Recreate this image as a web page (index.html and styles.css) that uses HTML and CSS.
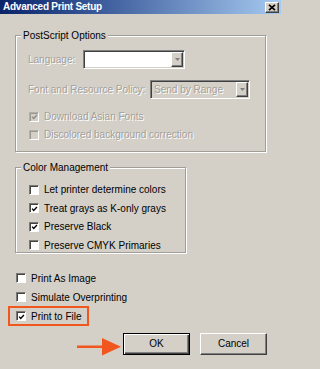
FILE: index.html
```html
<!DOCTYPE html>
<html lang="en">
<head>
<meta charset="utf-8">
<title>Advanced Print Setup</title>
<link rel="stylesheet" href="styles.css">
</head>
<body>
<div class="window">
  <div class="titlebar">
    <span class="title">Advanced Print Setup</span>
    <span class="close"><svg width="8" height="7" viewBox="0 0 8 7"><path d="M1 0.8L7 6.2M7 0.8L1 6.2" stroke="#000" stroke-width="1.7" fill="none"/></svg></span>
  </div>
  <div class="content">
    <div class="group group-ps">
      <span class="group-title">PostScript Options</span>
      <div class="field field-lang">
        <span class="label disabled">Language:</span>
        <span class="select select-lang">
          <span class="select-value"></span>
          <span class="select-btn"><svg width="5" height="3" viewBox="0 0 5 3"><path d="M0 0H5L2.5 3Z" fill="#808080"/></svg></span>
        </span>
      </div>
      <div class="field field-policy">
        <span class="label disabled">Font and Resource Policy:</span>
        <span class="select select-policy">
          <span class="select-value disabled">Send by Range</span>
          <span class="select-btn"><svg width="5" height="3" viewBox="0 0 5 3"><path d="M0 0H5L2.5 3Z" fill="#808080"/></svg></span>
        </span>
      </div>
      <div class="check-list check-list-ps">
        <div class="check is-disabled">
          <span class="box"><svg width="8" height="8" viewBox="0 0 8 8"><polyline points="1.3,3.6 3.1,5.6 6.8,1.6" fill="none" stroke-width="1.6"/></svg></span>
          <span class="text disabled">Download Asian Fonts</span>
        </div>
        <div class="check is-disabled">
          <span class="box"></span>
          <span class="text disabled">Discolored background correction</span>
        </div>
      </div>
    </div>

    <div class="group group-cm">
      <span class="group-title">Color Management</span>
      <div class="check-list check-list-cm">
        <div class="check">
          <span class="box"></span>
          <span class="text">Let printer determine colors</span>
        </div>
        <div class="check">
          <span class="box"><svg width="8" height="8" viewBox="0 0 8 8"><polyline points="1.3,3.6 3.1,5.6 6.8,1.6" fill="none" stroke-width="1.6"/></svg></span>
          <span class="text">Treat grays as K-only grays</span>
        </div>
        <div class="check">
          <span class="box"><svg width="8" height="8" viewBox="0 0 8 8"><polyline points="1.3,3.6 3.1,5.6 6.8,1.6" fill="none" stroke-width="1.6"/></svg></span>
          <span class="text">Preserve Black</span>
        </div>
        <div class="check">
          <span class="box"></span>
          <span class="text">Preserve CMYK Primaries</span>
        </div>
      </div>
    </div>

    <div class="check-list check-list-main">
      <div class="check">
        <span class="box"></span>
        <span class="text">Print As Image</span>
      </div>
      <div class="check">
        <span class="box"></span>
        <span class="text">Simulate Overprinting</span>
      </div>
      <div class="check highlight">
        <span class="box"><svg width="8" height="8" viewBox="0 0 8 8"><polyline points="1.3,3.6 3.1,5.6 6.8,1.6" fill="none" stroke-width="1.6"/></svg></span>
        <span class="text">Print to File</span>
      </div>
    </div>

    <div class="buttons">
      <svg class="arrow" width="44" height="18" viewBox="0 0 44 18"><path d="M0 7.6H25V0L44 8.75L25 17.5V10.1H0Z" fill="#f1561f"/></svg>
      <span class="btn btn-default">OK</span>
      <span class="btn">Cancel</span>
    </div>
  </div>
</div>
</body>
</html>
```

FILE: styles.css
```css
* {
  box-sizing: border-box;
}

html,
body {
  margin: 0;
  padding: 0;
}

html {
  background: #d4d0c8;
}

body {
  width: 281px;
  height: 369px;
  overflow: hidden;
  background: #d4d0c8;
  font-family: "Liberation Sans", Arial, sans-serif;
  font-size: 10px;
  color: #000;
}

.window {
  width: 281px;
  height: 369px;
  overflow: hidden;
  background: #d4d0c8;
  display: flex;
  flex-direction: column;
}

/* Title bar */
.titlebar {
  height: 14px;
  flex: none;
  display: flex;
  align-items: center;
  justify-content: space-between;
  padding: 0 2px 0 3px;
  background: linear-gradient(to right, #0a246a 0%, #3a5a9a 35%, #a6caf0 100%);
}

.title {
  color: #fff;
  font-weight: bold;
  font-size: 10px;
  line-height: 14px;
  letter-spacing: -0.25px;
}

.close {
  width: 14px;
  height: 11px;
  margin-top: 1px;
  display: flex;
  align-items: center;
  justify-content: center;
  background: #d4d0c8;
  border: 1px solid;
  border-color: #fff #404040 #404040 #fff;
  box-shadow: inset -1px -1px 0 #808080;
}

/* Content */
.content {
  display: flex;
  flex-direction: column;
  align-items: flex-start;
  padding: 0 14px 0 15px;
}

.disabled {
  color: #a3a09a;
  text-shadow: 1px 1px 0 #fff;
}

/* Etched group boxes */
.group {
  display: flex;
  flex-direction: column;
  align-items: flex-start;
  border: 1px solid #a09e98;
  box-shadow: inset 1px 1px 0 #fff, 1px 1px 0 #fff;
  padding: 0 0 0 12px;
}

.group-title {
  margin: -6px 0 0 -7px;
  padding: 0 2px;
  line-height: 12px;
  background: #d4d0c8;
  white-space: nowrap;
}

.group-ps {
  margin-top: 21px;
  width: 251px;
  padding-bottom: 10px;
}

.group-cm {
  margin-top: 15px;
  width: 171px;
  padding-bottom: 0;
}

/* Fields */
.field {
  display: flex;
  align-items: center;
  height: 19px;
}

.field-lang {
  margin-top: 8px;
}

.field-lang .label {
  width: 55px;
}

.field-policy {
  margin-top: 11px;
}

.field-policy .label {
  width: 122px;
}

.label {
  white-space: nowrap;
  line-height: 12px;
}

.select {
  display: flex;
  height: 19px;
  border: 1px solid;
  border-color: #808080 #fff #fff #808080;
  box-shadow: inset 1px 1px 0 #404040, inset -1px -1px 0 #d4d0c8;
  padding: 1px;
  background: #fff;
}

.select-lang {
  width: 102px;
}

.select-policy {
  width: 100px;
  background: #d4d0c8;
}

.select-value {
  flex: 1;
  padding-left: 2px;
  line-height: 15px;
  white-space: nowrap;
}

.select-btn {
  width: 12px;
  flex: none;
  display: flex;
  align-items: center;
  justify-content: center;
  background: #d4d0c8;
  border: 1px solid;
  border-color: #fff #404040 #404040 #fff;
  box-shadow: inset -1px -1px 0 #808080;
}

/* Checkboxes */
.check-list {
  display: flex;
  flex-direction: column;
  align-items: flex-start;
  margin-left: 1px;
}

.check-list-ps {
  margin-top: 11px;
  gap: 5px;
}

.check-list-cm {
  margin-top: 9px;
  gap: 5.67px;
}

.check-list-main {
  margin-top: 19px;
  gap: 6px;
}

.check {
  display: flex;
  align-items: center;
  gap: 5px;
  height: 13px;
}

.text {
  white-space: nowrap;
  line-height: 13px;
}

.box {
  width: 10px;
  height: 10px;
  flex: none;
  display: flex;
  align-items: center;
  justify-content: center;
  background: #fff;
  border: 1px solid;
  border-color: #7a7873 #fff #fff #7a7873;
  box-shadow: inset 1px 1px 0 #45433f;
  padding: 1px 0 0 1px;
}

.box polyline {
  stroke: #000;
}

.is-disabled .box {
  background: #d4d0c8;
  border-color: #b3b0a9 #fff #fff #b3b0a9;
  box-shadow: inset 1px 1px 0 #9a9791;
}

.is-disabled .box polyline {
  stroke: #8e8b85;
}

/* Orange highlight annotation */
.highlight {
  position: relative;
}

.highlight::after {
  content: "";
  position: absolute;
  left: -8px;
  right: -7px;
  top: -4px;
  bottom: -3px;
  border: 2px solid #f1561f;
}

/* Buttons */
.buttons {
  align-self: stretch;
  display: flex;
  justify-content: flex-end;
  gap: 10px;
  margin-top: 10px;
}

.arrow {
  margin-top: 5px;
  margin-right: -8px;
  flex: none;
}

.btn {
  width: 67px;
  height: 22px;
  display: flex;
  align-items: center;
  justify-content: center;
  background: #d4d0c8;
  border: 1px solid;
  border-color: #fff #404040 #404040 #fff;
  box-shadow: inset -1px -1px 0 #808080;
  line-height: 12px;
}

.btn-default {
  border: 1px solid #000;
  box-shadow: inset 1px 1px 0 #fff, inset -1px -1px 0 #404040, inset -2px -2px 0 #808080;
}
```
